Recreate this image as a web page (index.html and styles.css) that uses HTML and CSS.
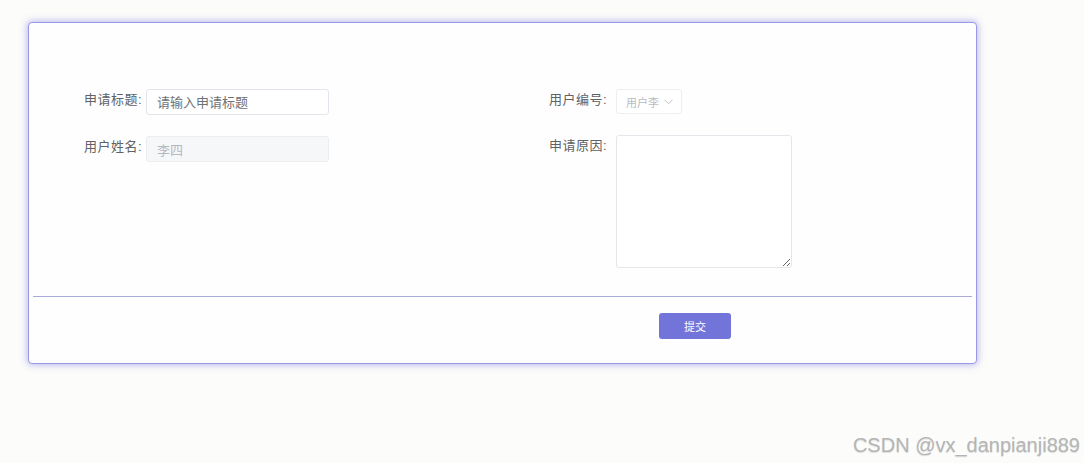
FILE: index.html
```html
<!DOCTYPE html>
<html lang="zh-CN">
<head>
    <meta charset="UTF-8">
    <title>申请</title>
    <link rel="stylesheet" href="styles.css">
</head>
<body>
    <div class="card">
        <div class="form">
            <div class="col">
                <div class="row">
                    <label class="label">申请标题:</label>
                    <input class="input title-input" type="text" placeholder="请输入申请标题">
                </div>
                <div class="row">
                    <label class="label">用户姓名:</label>
                    <input class="input" type="text" value="李四" disabled>
                </div>
            </div>
            <div class="col col-right">
                <div class="row">
                    <label class="label">用户编号:</label>
                    <div class="select">
                        <span>用户李</span>
                        <svg class="arrow" width="9" height="6" viewBox="0 0 9 6"><path d="M0.5 0.8 L4.5 4.8 L8.5 0.8" fill="none" stroke="#c0c4cc" stroke-width="1"/></svg>
                    </div>
                </div>
                <div class="row">
                    <label class="label">申请原因:</label>
                    <textarea class="textarea"></textarea>
                </div>
            </div>
        </div>
        <div class="divider"></div>
        <div class="footer">
            <button class="submit">提交</button>
        </div>
    </div>

    <div class="watermark">CSDN @vx_danpianji889</div>
</body>
</html>
```

FILE: styles.css
```css
body {
    margin: 0;
    padding: 22px 0 0 28px;
    background-color: #fcfcfb;
    font-family: "Liberation Sans", "Noto Sans CJK SC", sans-serif;
    height: 463px;
    box-sizing: border-box;
    position: relative;
    overflow: hidden;
}

.card {
    width: 949px;
    height: 342px;
    box-sizing: border-box;
    background-color: #fefefe;
    border: 1px solid #9898e4;
    border-radius: 4px;
    box-shadow: 0 0 7px 1px rgba(120, 120, 225, 0.5);
}

.form {
    display: flex;
    padding: 66px 0 0 33px;
    height: 273px;
    box-sizing: border-box;
}

.col {
    width: 465px;
    flex-shrink: 0;
    display: flex;
    flex-direction: column;
    gap: 21px;
}

.col-right {
    width: auto;
    flex: 1;
}

.row {
    display: flex;
    align-items: flex-start;
}

.label {
    width: 80px;
    text-align: right;
    font-size: 13px;
    color: #5f6266;
    line-height: 21px;
    margin-right: 4px;
    letter-spacing: 0.5px;
}

.col-right .label {
    margin-right: 9px;
}

.input {
    width: 183px;
    height: 26px;
    box-sizing: border-box;
    border: 1px solid #e2e5eb;
    border-radius: 3px;
    padding: 0 10px;
    font-family: inherit;
    font-size: 13px;
    color: #606266;
    background-color: #fff;
    outline: none;
}

.title-input::placeholder {
    color: #6f7276;
}

.input:disabled {
    background-color: #f6f7f9;
    border-color: #ebedf0;
    color: #b5b8bf;
}

.select {
    width: 66px;
    height: 25px;
    box-sizing: border-box;
    border: 1px solid #eceef2;
    border-radius: 3px;
    display: flex;
    align-items: center;
    padding: 0 0 0 9px;
    gap: 5px;
    font-size: 11px;
    color: #b9bcc3;
    background-color: #fff;
}

.textarea {
    width: 176px;
    height: 133px;
    box-sizing: border-box;
    border: 1px solid #e4e6ec;
    border-radius: 3px;
    background-color: #fff;
    margin: 0;
    outline: none;
}

.divider {
    height: 1px;
    margin: 0 4px;
    background-color: #a9a9db;
}

.footer {
    padding: 16px 0 0 630px;
}

.submit {
    width: 72px;
    height: 26px;
    border: none;
    border-radius: 3px;
    background-color: #7274da;
    color: #fff;
    font-family: inherit;
    font-size: 11px;
    cursor: pointer;
}

.watermark {
    position: absolute;
    right: 4px;
    bottom: 6px;
    font-size: 20px;
    color: #b5b5b5;
    text-shadow: 0 1px 1px rgba(0, 0, 0, 0.12);
}
```
